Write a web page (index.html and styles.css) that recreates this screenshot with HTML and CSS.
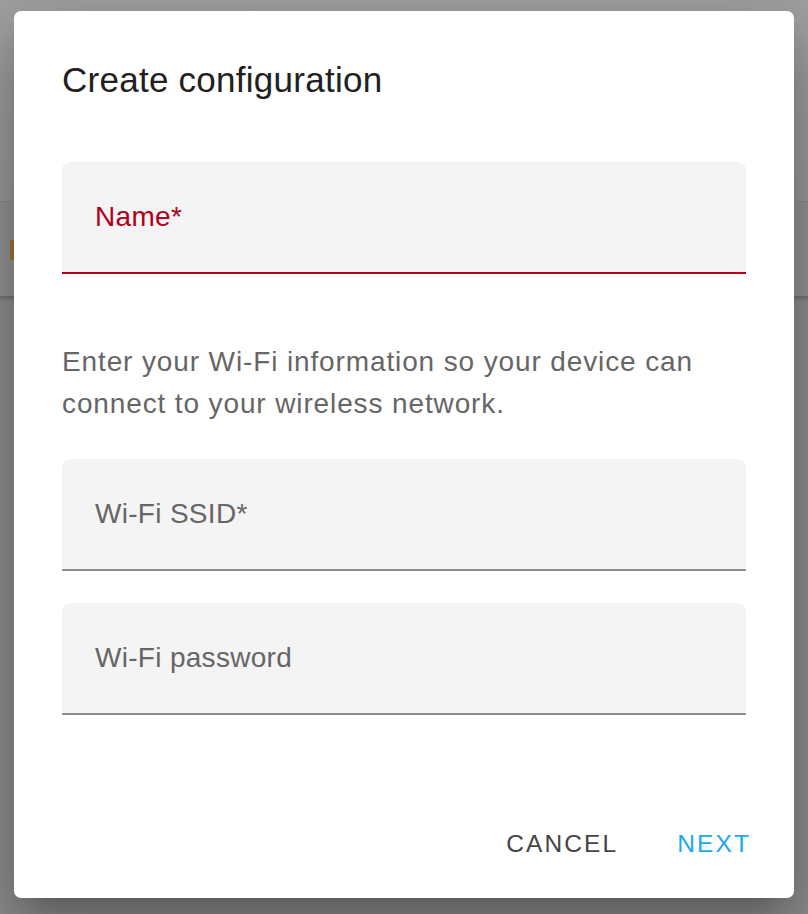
FILE: index.html
```html
<!DOCTYPE html>
<html lang="en">
<head>
<meta charset="utf-8">
<title>Create configuration</title>
<link rel="stylesheet" href="styles.css">
</head>
<body>
<div class="page">
  <header class="appbar"></header>
  <div class="toolbar"><span class="chip"></span></div>
  <main class="content"></main>
</div>
<div class="dialog" role="dialog" aria-labelledby="dlg-title">
  <div class="dialog-body">
    <h2 class="title" id="dlg-title">Create configuration</h2>
    <div class="field field-error">
      <span class="label">Name*</span>
    </div>
    <p class="helper">Enter your Wi-Fi information so your device can connect to your wireless network.</p>
    <div class="field field-ssid">
      <span class="label">Wi-Fi SSID*</span>
    </div>
    <div class="field field-pass">
      <span class="label">Wi-Fi password</span>
    </div>
  </div>
  <div class="dialog-actions">
    <button class="btn btn-cancel">CANCEL</button>
    <button class="btn btn-next">NEXT</button>
  </div>
</div>
</body>
</html>
```
FILE: styles.css
```css
* { box-sizing: border-box; }
html, body { margin: 0; padding: 0; }
body {
  width: 808px;
  height: 914px;
  overflow: hidden;
  background: #8b8b8b;
  font-family: "Liberation Sans", Arial, sans-serif;
  position: relative;
}
.page { display: flex; flex-direction: column; height: 914px; }
.appbar {
  height: 202px;
  background: linear-gradient(#a1a1a1, #989898);
  border-bottom: 1px solid #8c8c8c;
}
.toolbar {
  height: 94px;
  background: #939393;
  display: flex;
  align-items: center;
  padding-left: 10px;
  box-shadow: 0 3px 3px rgba(0,0,0,0.18);
  position: relative;
  z-index: 1;
}
.chip {
  display: block;
  width: 12px;
  height: 20px;
  background: #a3742f;
  margin-top: 2px;
}
.content { flex: 1; background: #8d8d8d; }

.dialog {
  position: absolute;
  z-index: 10;
  left: 14px;
  top: 11px;
  width: 780px;
  height: 887px;
  background: #fff;
  border-radius: 7px;
  box-shadow: 0 19px 26px -12px rgba(0,0,0,0.2), 0 42px 66px 5px rgba(0,0,0,0.14), 0 16px 80px 14px rgba(0,0,0,0.12);
  display: flex;
  flex-direction: column;
}
.dialog-body {
  padding: 41px 48px 0 48px;
  display: flex;
  flex-direction: column;
}
.title {
  margin: 0;
  font-size: 35px;
  line-height: 56px;
  font-weight: 400;
  letter-spacing: 0.26px;
  color: #212121;
}
.field {
  height: 112px;
  background: #f4f4f4;
  border-radius: 8px 8px 0 0;
  border-bottom: 2px solid #8d8d8d;
  padding: 41px 0 0 33px;
}
.field-error {
  margin-top: 54px;
  border-bottom-color: #b00020;
}
.label {
  display: block;
  font-size: 28px;
  line-height: 28px;
  letter-spacing: 0.3px;
  color: #666666;
}
.field-error .label { color: #b00020; }
.helper {
  margin: 67px 0 0 0;
  font-size: 28px;
  line-height: 42px;
  letter-spacing: 0.875px;
  color: #666666;
}
.field-ssid { margin-top: 34px; }
.field-pass { margin-top: 32px; }

.dialog-actions {
  display: flex;
  justify-content: flex-end;
  gap: 59px;
  padding: 108px 43px 0 0;
}
.btn {
  border: 0;
  background: none;
  padding: 0;
  margin: 0;
  font-family: "Liberation Sans", Arial, sans-serif;
  font-size: 24.5px;
  line-height: 42px;
  letter-spacing: 2.1px;
  cursor: pointer;
}
.btn-cancel { color: #444444; }
.btn-next { color: #1aa9f0; }
```
